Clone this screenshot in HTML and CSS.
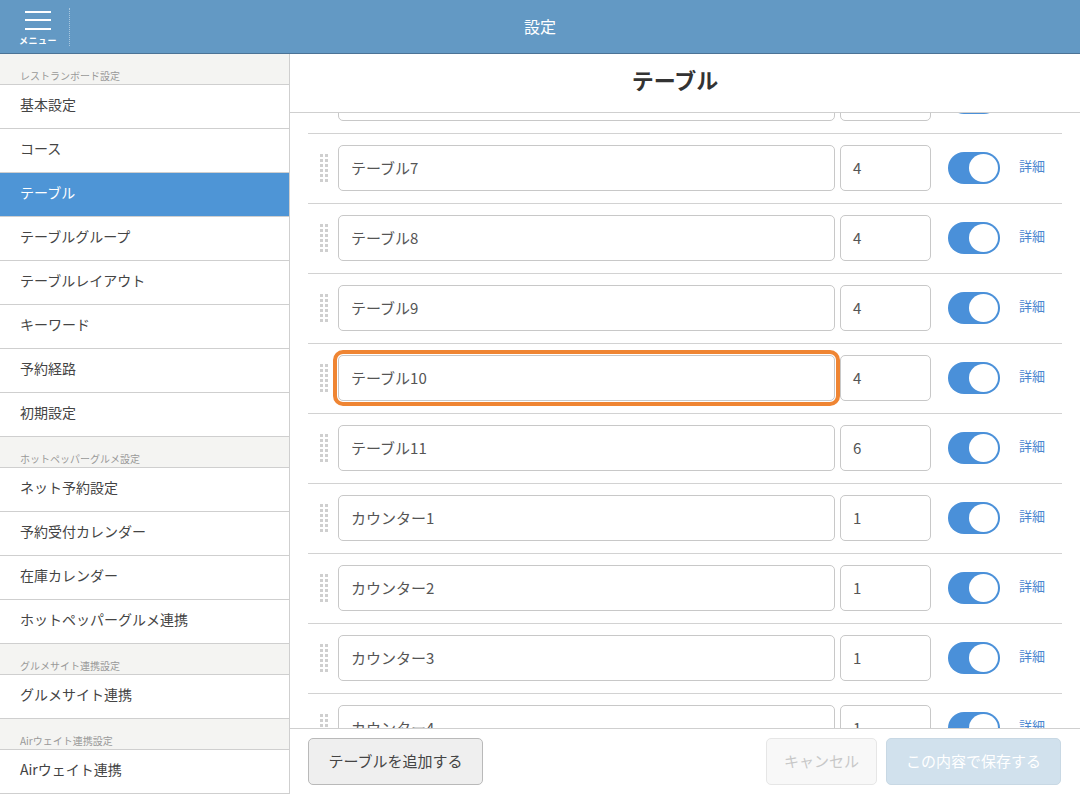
FILE: index.html
```html
<!DOCTYPE html>
<html lang="ja">
<head>
<meta charset="utf-8">
<title>設定</title>
<link rel="stylesheet" href="styles.css">
</head>
<body>
<div class="app">
  <header class="topbar">
    <div class="menu-btn">
      <svg class="burger" width="26" height="20" viewBox="0 0 26 20">
        <rect x="0" y="0" width="26" height="2" fill="#fff"/>
        <rect x="0" y="8" width="26" height="2" fill="#fff"/>
        <rect x="0" y="17" width="26" height="2" fill="#fff"/>
      </svg>
      <span class="menu-label">メニュー</span>
    </div>
    <div class="menu-sep"></div>
    <h1 class="topbar-title">設定</h1>
  </header>
  <div class="body">
    <nav class="sidebar">
      <div class="side-head">レストランボード設定</div>
      <div class="side-item">基本設定</div>
      <div class="side-item">コース</div>
      <div class="side-item active">テーブル</div>
      <div class="side-item">テーブルグループ</div>
      <div class="side-item">テーブルレイアウト</div>
      <div class="side-item">キーワード</div>
      <div class="side-item">予約経路</div>
      <div class="side-item">初期設定</div>
      <div class="side-head">ホットペッパーグルメ設定</div>
      <div class="side-item">ネット予約設定</div>
      <div class="side-item">予約受付カレンダー</div>
      <div class="side-item">在庫カレンダー</div>
      <div class="side-item">ホットペッパーグルメ連携</div>
      <div class="side-head">グルメサイト連携設定</div>
      <div class="side-item">グルメサイト連携</div>
      <div class="side-head">Airウェイト連携設定</div>
      <div class="side-item">Airウェイト連携</div>
    </nav>
    <main class="main">
      <div class="main-title">テーブル</div>
      <div class="list-wrap">
        <div class="list" id="list"></div>
      </div>
      <footer class="footer">
        <button class="btn btn-add">テーブルを追加する</button>
        <div class="footer-right">
          <button class="btn btn-cancel">キャンセル</button>
          <button class="btn btn-save">この内容で保存する</button>
        </div>
      </footer>
    </main>
  </div>
</div>
<script src="app.js"></script>
</body>
</html>
```

FILE: app.js
```js
const rows = [
  ["テーブル6", "4"],
  ["テーブル7", "4"],
  ["テーブル8", "4"],
  ["テーブル9", "4"],
  ["テーブル10", "4", true],
  ["テーブル11", "6"],
  ["カウンター1", "1"],
  ["カウンター2", "1"],
  ["カウンター3", "1"],
  ["カウンター4", "1"]
];
const handle = '<svg class="handle" width="8" height="28" viewBox="0 0 8 28">' +
  [0, 5, 10, 15, 20, 25].map(y => '<rect x="0" y="' + y + '" width="3" height="3" fill="#cfcfcf"/><rect x="5" y="' + y + '" width="3" height="3" fill="#cfcfcf"/>').join('') +
  '</svg>';
const list = document.getElementById('list');
list.innerHTML = rows.map(r =>
  '<div class="row">' + handle +
  '<div class="field name' + (r[2] ? ' focus' : '') + '">' + r[0] + '</div>' +
  '<div class="field num">' + r[1] + '</div>' +
  '<div class="toggle"><span class="knob"></span></div>' +
  '<a class="detail">詳細</a>' +
  '</div>'
).join('');
```

FILE: styles.css
```css
* { box-sizing: border-box; }
html, body { margin: 0; padding: 0; }
body {
  font-family: "Noto Sans CJK JP", "Noto Sans", sans-serif;
  color: #444;
  background: #fff;
}
.app {
  width: 1080px;
  height: 794px;
  display: flex;
  flex-direction: column;
  overflow: hidden;
}
.topbar {
  height: 54px;
  flex: none;
  background: #6399c4;
  border-bottom: 1px solid #4b7396;
  display: flex;
  align-items: center;
  position: relative;
}
.menu-btn {
  width: 69px;
  height: 53px;
  display: flex;
  flex-direction: column;
  align-items: center;
  padding: 11px 0 0 7px;
}
.burger { display: block; }
.menu-label {
  color: #fff;
  font-size: 9px;
  font-weight: bold;
  line-height: 12px;
  margin-top: 4px;
  letter-spacing: 0.5px;
}
.menu-sep {
  width: 0;
  height: 38px;
  border-left: 1px dotted rgba(255,255,255,0.45);
  align-self: center;
}
.topbar-title {
  position: absolute;
  left: 0;
  right: 0;
  top: 0;
  margin: 0;
  text-align: center;
  line-height: 53px;
  font-size: 16px;
  font-weight: normal;
  color: #fff;
  pointer-events: none;
}
.body {
  flex: 1;
  display: flex;
  min-height: 0;
}
.sidebar {
  width: 290px;
  flex: none;
  border-right: 1px solid #cfcfcf;
  background: #fff;
  overflow: hidden;
}
.side-head {
  height: 31px;
  background: #f4f4f2;
  border-bottom: 1px solid #cfcfcf;
  font-size: 10px;
  color: #999;
  padding: 15px 0 0 20px;
  line-height: 14px;
}
.side-item {
  height: 44px;
  border-bottom: 1px solid #cfcfcf;
  font-size: 14px;
  line-height: 39px;
  padding-left: 20px;
  color: #444;
}
.side-item.active {
  background: #4e95d6;
  color: #fff;
}
.main {
  flex: 1;
  display: flex;
  flex-direction: column;
  min-width: 0;
}
.main-title {
  height: 59px;
  flex: none;
  border-bottom: 1px solid #cfcfcf;
  text-align: center;
  font-size: 22px;
  font-weight: bold;
  color: #333;
  line-height: 51px;
  padding-right: 20px;
}
.list-wrap {
  flex: 1;
  overflow: hidden;
  padding: 0 18px;
}
.list { margin-top: -49px; }
.row {
  height: 70px;
  border-bottom: 1px solid #d2d2d2;
  display: flex;
  align-items: center;
  padding: 0 17px 1px 12px;
}
.handle { flex: none; margin-right: 10px; }
.field {
  height: 46px;
  border: 1px solid #c8c8c8;
  border-radius: 5px;
  font-size: 15px;
  color: #555;
  line-height: 44px;
  padding-left: 12px;
  background: #fff;
}
.field.name { flex: 1; }
.field.num { width: 91px; flex: none; margin-left: 5px; }
.field.focus {
  outline: 4px solid #ef8533;
  outline-offset: 1px;
}
.toggle {
  width: 52px;
  height: 32px;
  flex: none;
  margin-left: 17px;
  border-radius: 16px;
  background: #4a90d9;
  display: flex;
  align-items: center;
  justify-content: flex-end;
  padding-right: 2px;
}
.knob {
  width: 29px;
  height: 28px;
  border-radius: 50%;
  background: #fff;
}
.detail {
  flex: none;
  margin-left: 19px;
  margin-bottom: 5px;
  font-size: 13px;
  color: #4a86cf;
}
.footer {
  height: 66px;
  flex: none;
  border-top: 1px solid #cfcfcf;
  display: flex;
  align-items: center;
  justify-content: space-between;
  padding: 0 19px 0 18px;
}
.footer-right { display: flex; gap: 9px; }
.btn {
  height: 47px;
  border-radius: 5px;
  font-family: inherit;
  font-size: 15px;
  padding: 0 0 3px;
}
.btn-add {
  width: 175px;
  background: #efefef;
  border: 1px solid #b9b9b9;
  color: #444;
}
.btn-cancel {
  width: 111px;
  background: #f8f8f8;
  border: 1px solid #e6e6e6;
  color: #c8c8c8;
}
.btn-save {
  width: 175px;
  background: #d1e1ed;
  border: 1px solid #c8d8e4;
  color: #fff;
}
```
